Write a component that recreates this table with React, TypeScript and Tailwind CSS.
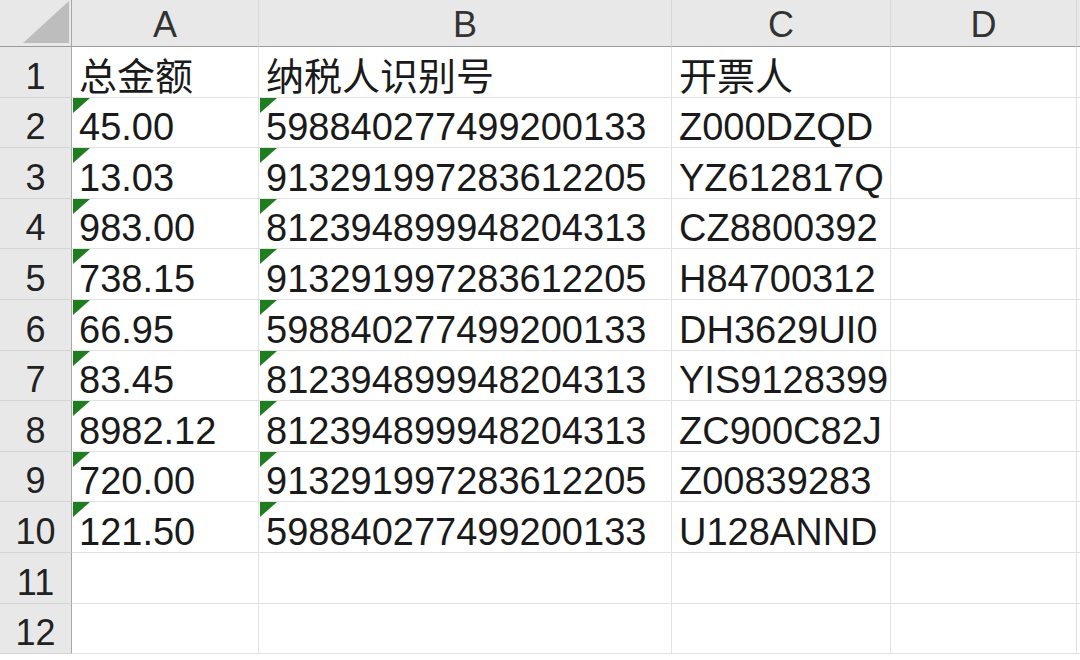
import React from "react";

const rows: [string, string, string][] = [
  ["45.00", "598840277499200133", "Z000DZQD"],
  ["13.03", "913291997283612205", "YZ612817Q"],
  ["983.00", "812394899948204313", "CZ8800392"],
  ["738.15", "913291997283612205", "H84700312"],
  ["66.95", "598840277499200133", "DH3629UI0"],
  ["83.45", "812394899948204313", "YIS9128399"],
  ["8982.12", "812394899948204313", "ZC900C82J"],
  ["720.00", "913291997283612205", "Z00839283"],
  ["121.50", "598840277499200133", "U128ANND"],
];

const font = {
  fontFamily: '"Liberation Sans", "Noto Sans CJK SC", sans-serif',
};

function Tri() {
  return (
    <svg className="absolute left-[1px] top-0" width="17" height="15" viewBox="0 0 17 15">
      <polygon points="0,0 17,0 0,15" fill="#1d7d1f" />
    </svg>
  );
}

function Cell({ text, tri, last }: { text?: string; tri?: boolean; last?: boolean }) {
  return (
    <div
      className={`relative flex items-end pl-[7px] h-full border-b border-[#e1e1e1] ${
        last ? "" : "border-r"
      } border-r-[#e1e1e1] text-[38px] leading-[40px] text-[#1a1a1a] whitespace-nowrap overflow-visible`}
    >
      {tri && <Tri />}
      {text}
    </div>
  );
}

export default function App() {
  const all: (string[] | null)[] = [
    ["总金额", "纳税人识别号", "开票人"],
    ...rows,
    null,
    null,
  ];
  return (
    <div className="w-[1080px] h-[660px] bg-white overflow-hidden" style={font}>
      <div className="grid grid-cols-[72px_187px_413px_219px_186px_3px] grid-rows-[47px_repeat(12,50.6px)]">
        {/* corner */}
        <div className="relative bg-[#e8e8e8] border-r border-r-[#a8a8a8] border-b border-b-[#9c9c9c]">
          <svg className="absolute right-[2px] bottom-[3px]" width="46" height="42" viewBox="0 0 46 42">
            <polygon points="46,0 46,42 0,42" fill="#bdbdbd" />
          </svg>
        </div>
        {["A", "B", "C", "D", ""].map((h, i) => (
          <div
            key={i}
            className={`flex items-end justify-center bg-[#e8e8e8] border-b border-b-[#9c9c9c] ${
              i < 4 ? "border-r border-r-[#d6d6d6]" : ""
            } text-[36px] leading-[42px] text-[#333]`}
          >
            {h}
          </div>
        ))}
        {all.map((r, ri) => (
          <React.Fragment key={ri}>
            <div className="flex items-end justify-center bg-[#e8e8e8] border-r border-r-[#a8a8a8] border-b border-b-[#d4d4d4] text-[36px] leading-[40px] text-[#222]">
              {ri + 1}
            </div>
            <Cell text={r ? r[0] : undefined} tri={!!r && ri > 0} />
            <Cell text={r ? r[1] : undefined} tri={!!r && ri > 0} />
            <Cell text={r ? r[2] : undefined} />
            <Cell />
            <Cell last />
          </React.Fragment>
        ))}
      </div>
    </div>
  );
}
